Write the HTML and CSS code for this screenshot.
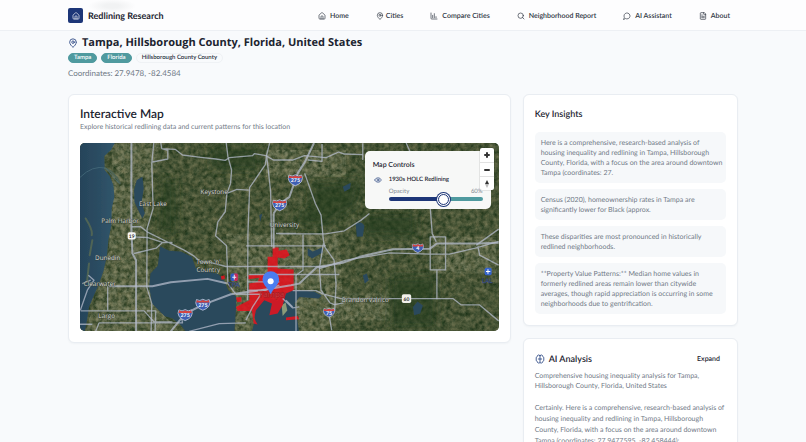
FILE: index.html
```html
<!DOCTYPE html>
<html lang="en">
<head>
<meta charset="utf-8">
<meta name="viewport" content="width=device-width, initial-scale=1">
<title>Redlining Research</title>
<link rel="stylesheet" href="styles.css">
</head>
<body>
<header class="site-header">
  <div class="container header-row">
    <a class="brand" href="#">
      <span class="brand-mark"><svg class="icon" viewBox="0 0 24 24"><path d="M15 21v-8a1 1 0 0 0-1-1h-4a1 1 0 0 0-1 1v8"/><path d="M3 10a2 2 0 0 1 .7-1.5l7-6a2 2 0 0 1 2.6 0l7 6A2 2 0 0 1 21 10v9a2 2 0 0 1-2 2H5a2 2 0 0 1-2-2z"/></svg></span>
      Redlining Research
    </a>
    <nav class="nav">
      <a href="#"><svg class="icon" viewBox="0 0 24 24"><path d="M15 21v-8a1 1 0 0 0-1-1h-4a1 1 0 0 0-1 1v8"/><path d="M3 10a2 2 0 0 1 .7-1.5l7-6a2 2 0 0 1 2.6 0l7 6A2 2 0 0 1 21 10v9a2 2 0 0 1-2 2H5a2 2 0 0 1-2-2z"/></svg>Home</a>
      <a class="tight" href="#"><svg class="icon" viewBox="0 0 24 24"><path d="M20 10c0 5-5.500 10.200-7.400 11.800a1 1 0 0 1-1.200 0C9.500 20.200 4 15 4 10a8 8 0 0 1 16 0"/><circle cx="12" cy="10" r="3"/></svg>Cities</a>
      <a href="#"><svg class="icon" viewBox="0 0 24 24"><path d="M3 3v16a2 2 0 0 0 2 2h16M8 17v-7M13 17V5M18 17v-3"/></svg>Compare Cities</a>
      <a href="#"><svg class="icon" viewBox="0 0 24 24"><circle cx="11" cy="11" r="8"/><path d="m21 21-4.300-4.300"/></svg>Neighborhood Report</a>
      <a href="#"><svg class="icon" viewBox="0 0 24 24"><path d="M7.900 20A9 9 0 1 0 4 16.100L2 22Z"/></svg>AI Assistant</a>
      <a href="#"><svg class="icon" viewBox="0 0 24 24"><path d="M15 2H6a2 2 0 0 0-2 2v16a2 2 0 0 0 2 2h12a2 2 0 0 0 2-2V7Z"/><path d="M14 2v4a2 2 0 0 0 2 2h4M10 9H8M16 13H8M16 17H8"/></svg>About</a>
    </nav>
  </div>
</header>

<main class="container">
  <section class="place">
    <h1><svg class="icon accent" viewBox="0 0 24 24"><path d="M20 10c0 5-5.500 10.200-7.400 11.800a1 1 0 0 1-1.200 0C9.500 20.200 4 15 4 10a8 8 0 0 1 16 0"/><circle cx="12" cy="10" r="3"/></svg>Tampa, Hillsborough County, Florida, United States</h1>
    <div class="badges">
      <span class="badge">Tampa</span>
      <span class="badge">Florida</span>
      <span class="badge outline">Hillsborough County County</span>
    </div>
    <p class="coords">Coordinates: 27.9478, -82.4584</p>
  </section>

  <div class="layout">
    <section class="card map-card">
      <h2>Interactive Map</h2>
      <p class="sub">Explore historical redlining data and current patterns for this location</p>
      <div class="map">
        <svg class="map-art" viewBox="3 9 1254 564" preserveAspectRatio="xMidYMid slice" role="img" aria-label="Satellite map of Tampa">
          <defs>
            <filter id="terrain" x="0" y="0" width="100%" height="100%" color-interpolation-filters="sRGB">
              <feTurbulence type="fractalNoise" baseFrequency="0.07" numOctaves="4" seed="8"/>
              <feColorMatrix values="0.4 0.1 0 0 0.03  0.3 0.1 0 0 0.13  0.26 0.1 0 0 0.03  0 0 0 0 1"/>
            </filter>
            <filter id="town" x="0" y="0" width="100%" height="100%" color-interpolation-filters="sRGB">
              <feTurbulence type="fractalNoise" baseFrequency="0.08" numOctaves="3" seed="21" result="n"/>
              <feColorMatrix in="n" values="0 0 0 0 0.62  0 0 0 0 0.62  0 0 0 0 0.5  0 2.400 0 0 -0.800"/>
              <feComposite operator="in" in2="SourceGraphic"/>
            </filter>
            <filter id="soft"><feGaussianBlur stdDeviation="14"/></filter>
            <filter id="shore"><feGaussianBlur stdDeviation="2"/></filter>
            <linearGradient id="gulf"><stop offset="0" stop-color="#264359"/><stop offset="1" stop-color="#31566b"/></linearGradient>
            <g id="interstate">
              <path d="M-19-14Q-9-8 0-15Q9-8 19-14Q24-4 18 6Q12 14 0 18Q-12 14-18 6Q-24-4-19-14Z" fill="#3f5fb4" stroke="#dfe4f2" stroke-width="2"/>
              <path d="M-18-13Q-9-7 0-13Q9-7 18-13L20-5H-20Z" fill="#d6453f"/>
            </g>
          </defs>
          <rect x="3" y="9" width="1254" height="564" fill="#34472c"/>
          <rect x="3" y="9" width="1254" height="564" filter="url(#terrain)"/>
          <g filter="url(#town)" opacity=".5">
            <path d="M100 9H240L210 190 190 330 240 510 300 573H20L90 330Z" fill="#fff"/>
            <path d="M440 280H780L790 480 730 573H470Z" fill="#fff"/>
            <path d="M560 30H800V110H560ZM1060 290H1250V400H1060ZM760 460H930V540H760Z" fill="#fff"/>
          </g>
          <g fill="#203a1b" opacity=".6" filter="url(#soft)">
            <path d="M245 120H290V280H245ZM700 130L850 120 830 200 740 260 630 250 690 200ZM390 20H540V90H400ZM930 410H1070V560H930ZM850 220H1010V290H850Z"/>
          </g>
          <g fill="#2b485b" filter="url(#shore)">
            <path fill="url(#gulf)" d="M0 0H112L96 30 76 48 77 90 92 108 103 135 106 170 98 205 97 255 88 300 84 345 74 390 62 425 45 465 30 500 24 540 16 580H0Z"/>
            <path d="M173 120L190 110 194 145 188 185 197 220 190 235 177 210 166 185 165 150Z"/>
            <path d="M243 318L270 332 305 334 338 350 350 384 386 393 418 402 436 423 447 450 471 468 470 510 465 580H325L305 555 280 535 257 528 236 508 219 490 210 440 214 400 236 377Z"/>
            <path d="M522 500L560 470 596 482 612 460 638 450 704 454 727 466 718 475 660 470 646 490 654 540 660 580H515L528 540Z"/>
            <path d="M829 252Q848 240 855 258L850 289 832 290ZM1000 500L1014 484 1030 496 1022 520 1004 525ZM790 140L814 128 812 145 795 155ZM540 225L549 221 543 245ZM850 405L862 400 868 420 856 430ZM685 324L700 334 728 322 731 336 698 355 685 345Z"/>
          </g>
          <path d="M20 235Q42 270 38 285M40 300L32 345M30 370L24 425M78 85Q96 90 112 112L122 130" fill="none" stroke="#4f6455" stroke-width="6" stroke-linecap="round"/>
          <path d="M3 112Q40 75 80 84L118 128" fill="none" stroke="#4b7180" stroke-width="2"/>
          <path d="M607 495L619 487 624 511 610 527Z" fill="#8b9b78"/>
          <g class="redline">
            <path d="M580 322H598V332L622 328 631 345 615 355 595 352V385L643 388V450L620 460 610 495 595 520 570 525 578 490 555 480 530 510 525 535 535 553 523 550 518 512 475 512 470 500 510 480V430L535 425 540 413 508 417 507 405 565 402V350H580Z"/>
            <path d="M470 472L486 470 487 484 474 486ZM620 532L655 527 660 537 620 540ZM425 408L436 405 437 416 427 419Z"/>
          </g>
          <g class="roads">
            <path class="wide" d="M157 9V270L160 340 171 360V573"/>
            <path d="M224 9L218 70 222 205 204 265 203 440 218 490 216 573M245 9L248 26 266 31V57L220 66M248 26L288 28 310 45 365 52 410 57 438 61 450 53 520 47 525 41 560 47 582 60H640L675 47 740 53 778 36 795 42 850 44"/>
            <path d="M441 9L446 50 457 90 454 130 443 160 438 215 416 245 409 287 442 317 446 430 469 461M443 160L473 148 508 150M562 45L558 74 511 143 506 280 505 480M571 9L562 45 574 155 577 320"/>
            <path class="wide" d="M583 220V325M704 9L676 67 655 100 630 171 602 190 583 220"/>
            <path d="M676 100L708 190 725 225 732 300 736 320 764 360 770 430 766 510 750 530 757 570M728 12V64L685 60M980 9L992 36 1042 70 1058 280 1070 305"/>
            <path d="M158 260H185L204 275 250 298 315 330 345 348 365 366H390L440 379H740M158 290 204 292 250 307 231 324 165 340M250 307H280"/>
            <path class="wide" d="M90 438H220L275 426 385 416 445 430M275 573L316 522 370 494 455 462 545 450 635 435 660 430 712 381 790 368 840 350 940 327 1050 326 1072 310H1195L1257 308"/>
            <path d="M720 385L800 360 930 338 1050 342 1110 342 1190 323 1257 304M1195 318L1200 345 1257 375M1190 315L1257 267M1052 290H1098V389H1052ZM1072 388V477M600 281H738L795 272 845 240 870 220M500 317H740M590 280H650M510 403H780M506 425H600M505 450H560L600 435"/>
            <path d="M671 283V390L650 405V573M732 310L720 385 725 450 752 488 765 493 792 488M640 451H710L730 461 785 475H1120L1145 494H1200L1257 542M610 475L640 503 660 500M470 462H545L520 500 500 540M500 548L420 550 330 573"/>
            <path d="M5 512H195L225 545H280M203 512H230L228 573M86 438V512M10 430L35 420M28 405L45 420 25 450 4 510M50 573L60 548H310L307 530M620 480L640 500M3 552H40M850 60V10"/>
          </g>
          <g class="labels">
            <text x="180" y="197">East Lake</text>
            <text x="67" y="248">Palm Harbor</text>
            <text x="364" y="163">Keystone</text>
            <text x="48" y="360">Dunedin</text>
            <text x="351" y="372">Town 'n'</text>
            <text x="352" y="396">Country</text>
            <text x="14" y="437">Clearwater</text>
            <text x="58" y="532">Largo</text>
            <text x="571" y="262">University</text>
            <text x="787" y="484">Brandon</text>
            <text x="868" y="484">Valrico</text>
            <text class="city" x="538" y="470">Tampa</text>
            <text class="air" x="447" y="440">TPA</text>
            <text class="air" x="1207" y="427">LAL</text>
          </g>
          <g class="shields">
            <use href="#interstate" x="601" y="194"/><text x="601" y="201">275</text>
            <use href="#interstate" x="648" y="119"/><text x="648" y="126">275</text>
            <use href="#interstate" x="371" y="492"/><text x="371" y="499">275</text>
            <use href="#interstate" x="318" y="523"/><text x="318" y="530">275</text>
            <g transform="translate(1015 323) scale(.8)"><use href="#interstate"/></g><text x="1015" y="330">4</text>
            <g transform="translate(749 516) scale(.8)"><use href="#interstate"/></g><text x="749" y="523">75</text>
            <rect x="146" y="276" width="24" height="22" rx="5" fill="#f7f7f5"/><text class="dark" x="158" y="293">19</text>
            <rect x="967" y="462" width="28" height="26" rx="5" fill="#f1f0eb"/><text class="dark" x="981" y="481">60</text>
            <rect x="454" y="400" width="22" height="22" rx="5" fill="#2f5bc4"/><path d="M465 400h7q4 0 4 4v14q0 4-4 4h-7Z" fill="#c92d58"/><path d="M459 411h12M465 404v14" stroke="#e8edff" stroke-width="3"/>
            <rect x="1215" y="383" width="21" height="22" rx="5" fill="#3564cb"/><path d="M1219 394h13M1225 387v14" stroke="#fff" stroke-width="3"/>
          </g>
          <path d="M574 462Q568 449 556 435A25 25 0 1 1 593 435Q580 449 574 462Z" fill="#4b7df0"/>
          <circle cx="574" cy="423" r="9" fill="#fff"/>
        </svg>
        <div class="controls">
          <h3>Map Controls</h3>
          <div class="controls-body">
            <button class="eye" type="button" aria-label="Toggle layer"><svg class="icon accent" viewBox="0 0 24 24"><path d="M2 12a10.800 10.800 0 0 1 20 0 10.800 10.800 0 0 1-20 0"/><circle cx="12" cy="12" r="3"/></svg></button>
            <div class="layer">
              <p class="layer-name">1930s HOLC Redlining</p>
              <div class="opacity-row"><label for="opacity">Opacity</label><output for="opacity">60%</output></div>
              <input id="opacity" type="range" min="0" max="100" value="60">
            </div>
          </div>
        </div>
        <div class="zoom">
          <button type="button" aria-label="Zoom in"><svg viewBox="0 0 14 14"><path d="M7 5v4M5 7h4"/></svg></button>
          <button type="button" aria-label="Zoom out"><svg viewBox="0 0 14 14"><path d="M5 7h4"/></svg></button>
          <button type="button" aria-label="Reset bearing"><svg class="compass" viewBox="0 0 14 14"><path d="M7 3 9 7H5Z" fill="#333"/><path d="M7 11 9 7H5Z" fill="#bbb"/></svg></button>
        </div>
      </div>
    </section>

    <aside class="side">
      <section class="card insights">
        <h2>Key Insights</h2>
        <ul>
          <li>Here is a comprehensive, research-based analysis of housing inequality and redlining in Tampa, Hillsborough County, Florida, with a focus on the area around downtown Tampa (coordinates: 27.</li>
          <li>Census (2020), homeownership rates in Tampa are significantly lower for Black (approx.</li>
          <li>These disparities are most pronounced in historically redlined neighborhoods.</li>
          <li>**Property Value Patterns:** Median home values in formerly redlined areas remain lower than citywide averages, though rapid appreciation is occurring in some neighborhoods due to gentrification.</li>
        </ul>
      </section>
      <section class="card analysis">
        <div class="analysis-head">
          <h2><svg class="icon accent" viewBox="0 0 24 24"><path d="M12 4a3.500 3.500 0 0 0-6.500 2A4.500 4.500 0 0 0 3 12a4.500 4.500 0 0 0 2.500 6A3.500 3.500 0 0 0 12 20a3.500 3.500 0 0 0 6.500-2A4.500 4.500 0 0 0 21 12a4.500 4.500 0 0 0-2.500-6A3.500 3.500 0 0 0 12 4ZM12 4v16M8 12h8"/></svg>AI Analysis</h2>
          <button type="button">Expand</button>
        </div>
        <p class="summary">Comprehensive housing inequality analysis for Tampa, Hillsborough County, Florida, United States</p>
        <p class="body-text">Certainly. Here is a comprehensive, research-based analysis of housing inequality and redlining in Tampa, Hillsborough County, Florida, with a focus on the area around downtown Tampa (coordinates: 27.9477595, -82.458444):</p>
      </section>
    </aside>
  </div>
</main>
</body>
</html>
```
FILE: styles.css
```css
* { box-sizing: border-box; }

body {
  margin: 0;
  background: #f8fafc;
  color: #1c2430;
  font-family: Lato, "Open Sans", sans-serif;
  font-size: 7px;
  line-height: 10px;
  text-rendering: geometricPrecision;
}

h1, h2, h3, p, ul { margin: 0; padding: 0; }
a { color: inherit; text-decoration: none; }
button {
  border: 0;
  padding: 0;
  background: none;
  color: inherit;
  font: inherit;
  text-rendering: inherit;
  cursor: pointer;
}

.container {
  max-width: 670px;
  margin: 0 auto;
}

.icon {
  flex: none;
  width: 8px;
  height: 8px;
  fill: none;
  stroke: currentColor;
  stroke-width: 2;
  stroke-linecap: round;
  stroke-linejoin: round;
}
.accent { color: #24417f; }

.site-header {
  position: sticky;
  top: 0;
  z-index: 10;
  background: #fdfdfe;
  border-bottom: 1px solid #edf0f4;
}
.header-row {
  display: flex;
  align-items: center;
  justify-content: space-between;
  height: 30px;
  padding-top: 1px;
  background: radial-gradient(24px 7px at 44px 6px, #f1f2f3 30%, transparent);
}
.brand {
  display: flex;
  align-items: center;
  gap: 5px;
  font-size: 9px;
  font-weight: 700;
}
.brand-mark {
  display: grid;
  place-items: center;
  width: 15px;
  height: 15px;
  border-radius: 2px;
  background: #1d3678;
  color: #fff;
}
.nav {
  display: flex;
  gap: 27px;
  padding-right: 8px;
  font-weight: 600;
  color: #2c3440;
}
.nav a {
  display: flex;
  align-items: center;
  gap: 4px;
}
.nav .tight { gap: 2px; }

.place { padding: 5px 0 16px; }
.place h1 {
  display: flex;
  align-items: center;
  gap: 4px;
  font-family: "Open Sans", sans-serif;
  font-size: 11px;
  line-height: 14px;
  font-weight: 700;
}
.place h1 .icon { width: 10px; height: 10px; }
.badges {
  display: flex;
  gap: 4px;
  margin-top: 3px;
}
.badge {
  padding: 0 5px;
  border: 1px solid #4f9a9f;
  border-radius: 6px;
  background: #4f9a9f;
  color: #fff;
  font-size: 6px;
  line-height: 8px;
  font-weight: 600;
}
.badge.outline {
  background: transparent;
  border-color: #eff2f5;
  color: #28303c;
}
.coords {
  margin-top: 5px;
  font-size: 8px;
  color: #6f7885;
}

.layout {
  display: grid;
  grid-template-columns: repeat(3, minmax(0, 1fr));
  gap: 12px;
  align-items: start;
}
.card {
  border: 1px solid #e9edf2;
  border-radius: 6px;
  background: #fff;
  box-shadow: 0 1px 2px rgb(20 40 70 / 4%);
  padding: 12px 11px 11px;
}
.map-card { grid-column: span 2; }
.map-card h2 {
  font-size: 12px;
  line-height: 14px;
  font-weight: 600;
}
.sub {
  margin-top: 1px;
  color: #717a87;
}

.map {
  position: relative;
  margin-top: 11px;
  overflow: hidden;
  border-radius: 5px;
}
.map-art {
  display: block;
  width: 100%;
  aspect-ratio: 1254 / 564;
}
.redline path { fill: #e3131f; fill-opacity: .88; }
.roads path {
  fill: none;
  stroke: #b4bbcb;
  stroke-width: 4;
  stroke-linejoin: round;
  stroke-opacity: .75;
}
.roads .wide { stroke-width: 6; }
.labels text {
  fill: #d3d5d0;
  stroke: #353d35;
  stroke-width: 3;
  stroke-opacity: .6;
  paint-order: stroke;
  font-family: "Open Sans", sans-serif;
  font-size: 19px;
}
.labels .city {
  font-size: 24px;
  fill: #d0393f;
  stroke: #7d1c22;
}
.labels .air { fill: #3f5a9d; stroke: #243047; }
.shields text {
  font-size: 16px;
  font-weight: 700;
  fill: #fff;
  text-anchor: middle;
}
.shields .dark { fill: #333; font-size: 15px; }

.controls {
  position: absolute;
  top: 8px;
  right: 8px;
  width: 126px;
  padding: 9px 8px 8px;
  border-radius: 5px;
  background: #f7f8f7;
}
.controls h3 {
  font-size: 7px;
  line-height: 10px;
  font-weight: 600;
}
.controls-body {
  display: flex;
  gap: 6px;
  margin-top: 6px;
}
.eye { flex: none; height: 8px; width: 10px; }
.eye .icon { display: block; margin: 0 auto; }
.layer { flex: 1; }
.layer-name {
  font-size: 6px;
  line-height: 8px;
  font-weight: 600;
}
.opacity-row {
  display: flex;
  justify-content: space-between;
  margin-top: 4px;
  font-size: 6px;
  line-height: 8px;
  color: #858b95;
}
input[type="range"] {
  display: block;
  appearance: none;
  width: 100%;
  height: 4px;
  margin: 1px 0 0;
  border-radius: 2px;
  background: linear-gradient(90deg, #1d3678 60%, #4f9a9f 60%);
}
input[type="range"]::-webkit-slider-thumb {
  appearance: none;
  width: 11px;
  height: 11px;
  border: 1px solid #1d3678;
  border-radius: 50%;
  background: #fff;
  box-shadow: 0 0 0 1px #fff, 0 0 0 2px #1d3678;
}

.zoom {
  position: absolute;
  top: 5px;
  right: 5px;
  display: grid;
  border-radius: 2px;
  background: #fff;
  box-shadow: 0 0 0 1px rgb(0 0 0 / 8%);
}
.zoom button { width: 14px; height: 14px; }
.zoom button + button { border-top: 1px solid #e2e2e2; }
.zoom svg {
  display: block;
  width: 14px;
  height: 14px;
  stroke: #333;
  stroke-width: 2;
  stroke-linecap: round;
}
.zoom .compass { stroke: none; }

.side {
  display: grid;
  gap: 12px;
}
.side h2 {
  font-size: 9px;
  line-height: 14px;
  font-weight: 600;
}
.insights ul {
  display: grid;
  gap: 6px;
  margin-top: 11px;
  list-style: none;
}
.insights li {
  padding: 6px 2px 5px 6px;
  border-radius: 5px;
  background: #f6f8fa;
  color: #717a87;
}
.analysis-head {
  display: flex;
  align-items: center;
  justify-content: space-between;
  padding: 1px 6px 5px 0;
}
.side .analysis h2 {
  display: flex;
  align-items: center;
  gap: 4px;
}
.analysis h2 .icon { width: 10px; height: 10px; }
.analysis button { font-weight: 600; }
.summary { color: #717a87; }
.body-text {
  margin-top: 12px;
  line-height: 11px;
  color: #717a87;
}
```
